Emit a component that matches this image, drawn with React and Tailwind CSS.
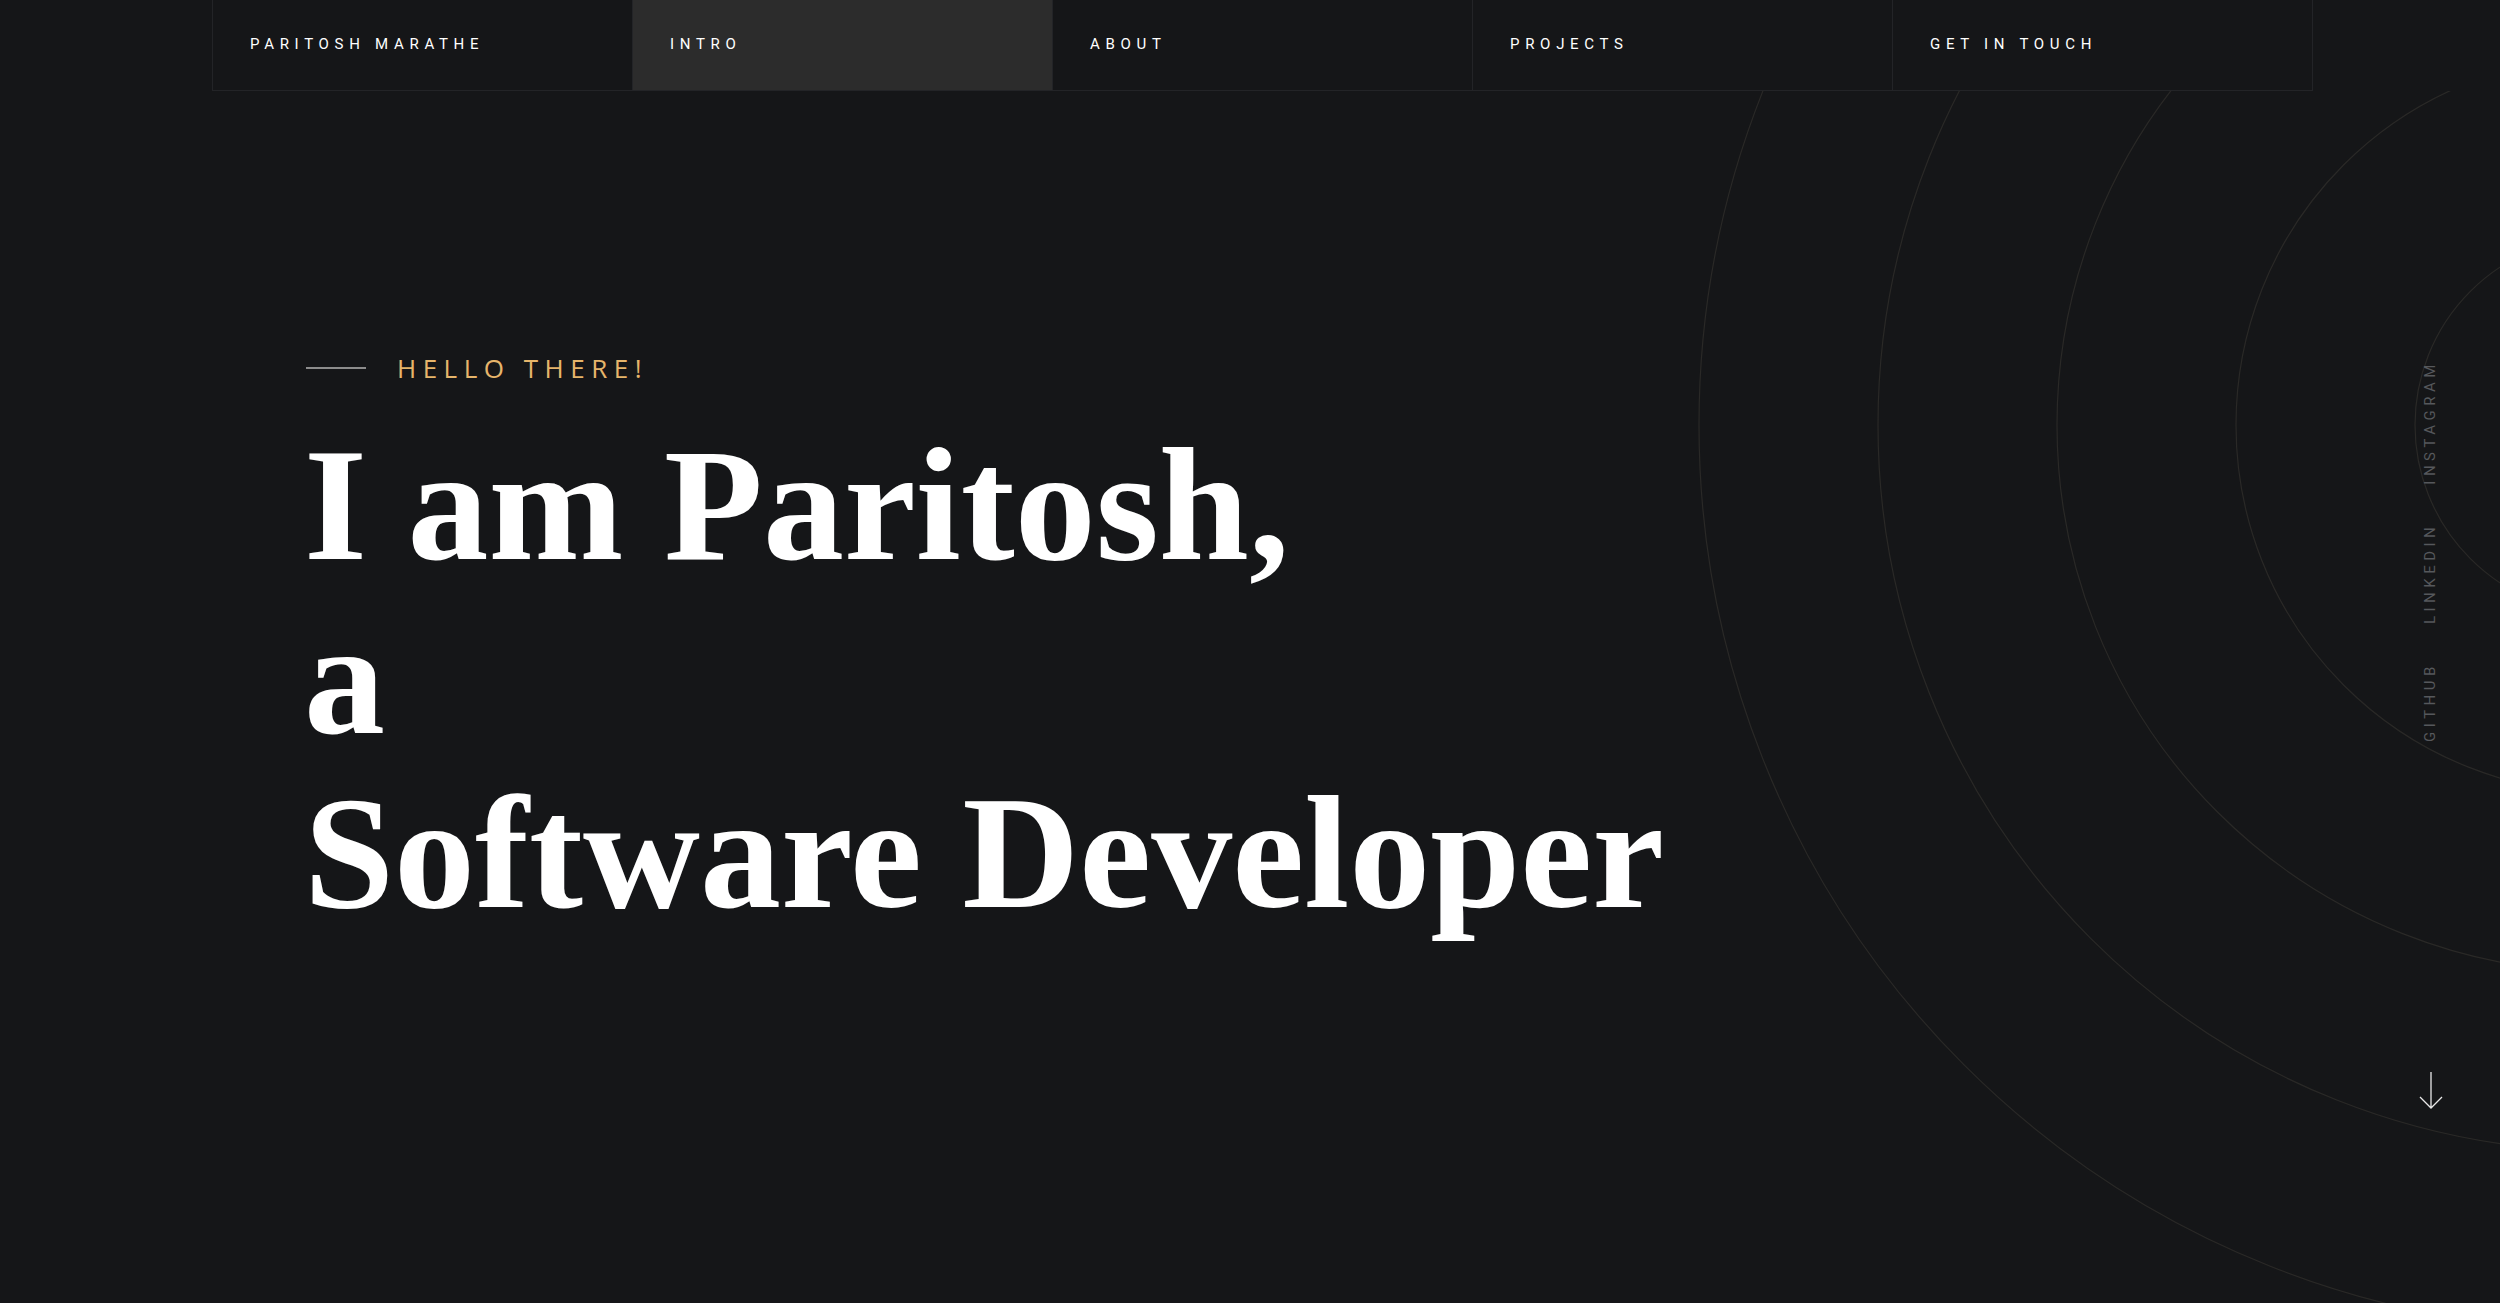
import React from 'react';

const navItems = ['Paritosh Marathe', 'Intro', 'About', 'Projects', 'Get in touch'];
const socials = ['Github', 'LinkedIn', 'Instagram'];
const radii = [189, 368, 547, 726, 905];

function Rings() {
  // concentric rings sitting off the right edge
  return (
    <svg className="absolute inset-0 pointer-events-none" width="2500" height="1212" viewBox="0 0 2500 1212" fill="none">
      {radii.map((r) => (
        <circle key={r} cx="2604" cy="334" r={r} stroke="#2a2927" strokeWidth="1.2" />
      ))}
    </svg>
  );
}

export default function App() {
  return (
    <div className="relative w-[2500px] h-[1303px] overflow-hidden bg-[#151618] font-['Roboto',sans-serif]">
      {/* Nav */}
      <nav className="relative z-10 ml-[212px] flex h-[91px] w-fit border-l border-b border-[#232427]">
        {navItems.map((item) => (
          <a
            key={item}
            href="#"
            className={`flex w-[420px] items-center border-r border-[#232427] pb-[2px] pl-[37px] text-[15px] uppercase tracking-[0.38em] text-white ${
              item === 'Intro' ? 'bg-[#2c2c2c]' : 'bg-[#151618]'
            }`}
          >
            {item}
          </a>
        ))}
      </nav>

      {/* Hero */}
      <section className="relative h-[1212px]">
        <Rings />
        <div className="relative pl-[304px] pt-[261px]">
          <div className="flex h-[32px] items-center gap-[31px] pl-[2px]">
            <span className="h-[2px] w-[60px] bg-[#8c8c8c]" />
            <span className="font-['Open_Sans',sans-serif] text-[26px] uppercase tracking-[0.25em] text-[#e6b56b]">
              Hello there!
            </span>
          </div>
          <h1 className="mt-[34px] font-['Liberation_Serif',serif] text-[162px] font-bold leading-[174px] text-white">
            I am Paritosh,
            <br />a
            <br />
            Software Developer
          </h1>
        </div>
      </section>

      {/* Social links */}
      <div className="absolute left-[2430px] top-[551px] flex -translate-x-1/2 -translate-y-1/2 -rotate-90 items-center gap-[38px] whitespace-nowrap">
        {socials.map((s) => (
          <a key={s} href="#" className="text-[15px] uppercase tracking-[0.3em] text-[#56585c]">
            {s}
          </a>
        ))}
      </div>

      {/* Scroll arrow */}
      <svg className="absolute left-[2419px] top-[1070px]" width="24" height="40" viewBox="0 0 24 40" fill="none">
        <path d="M12 2v36M1 27l11 11 11-11" stroke="#e8e8e8" strokeWidth="1.3" />
      </svg>
    </div>
  );
}
